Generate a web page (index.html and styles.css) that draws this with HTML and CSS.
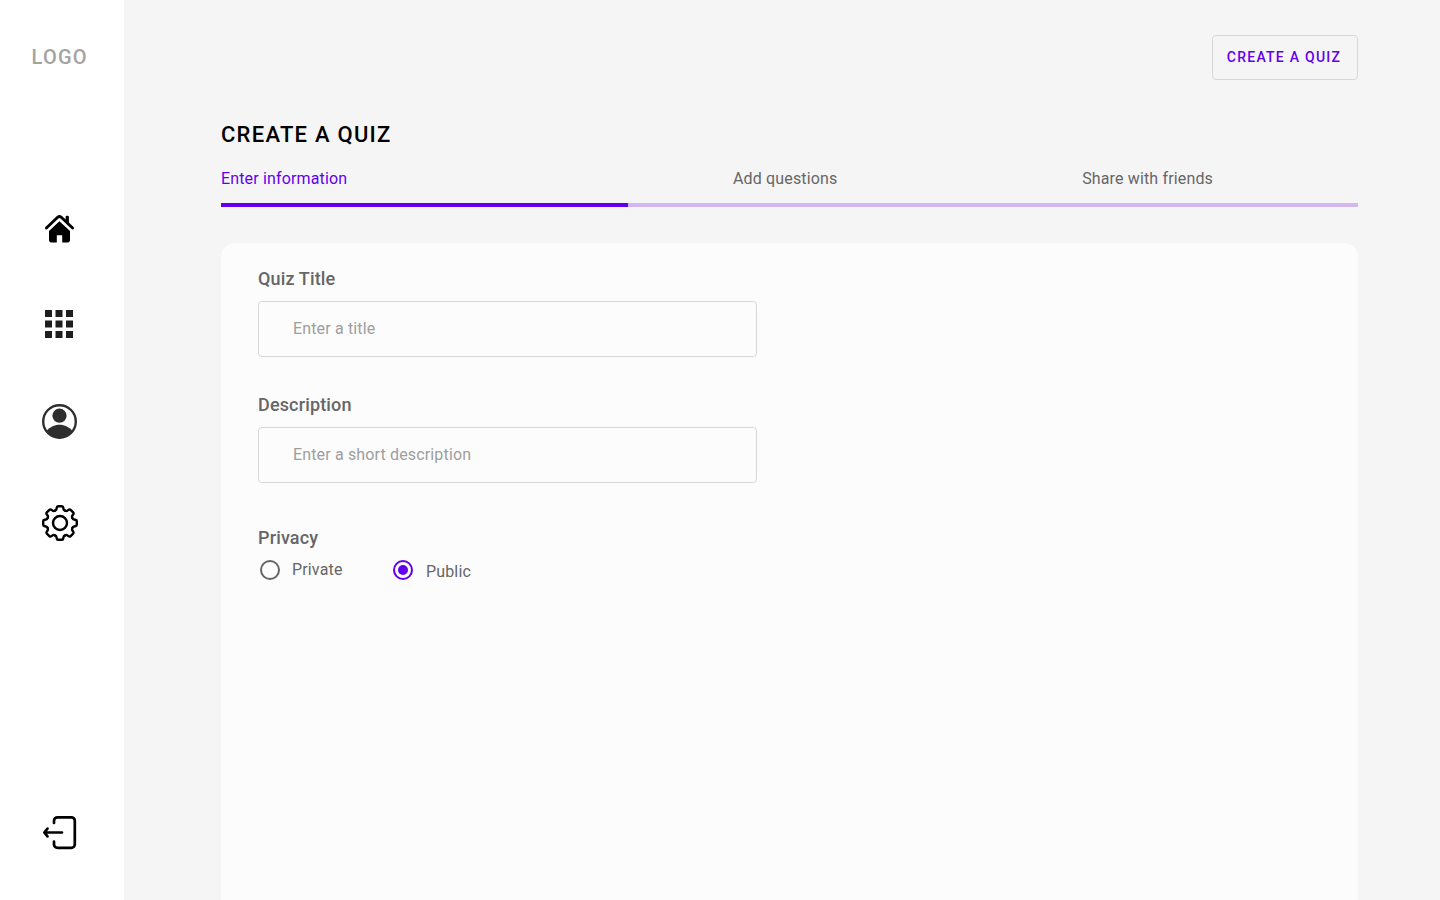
FILE: index.html
```html
<!DOCTYPE html>
<html lang="en">
<head>
<meta charset="utf-8">
<title>Create a quiz</title>
<link rel="stylesheet" href="styles.css">
</head>
<body>
<div class="app">
  <aside class="sidebar">
    <div class="logo">LOGO</div>
    <nav class="nav">
      <a class="nav-item"><svg width="36" height="36" viewBox="0 -.4 36 36"><path d="M24.600 8.600V5.500a1.200 1.200 0 0 1 1.200-1.200h.900a1.200 1.200 0 0 1 1.200 1.200v6.500z"/><path d="M5.400 16.600 16.600 5.900a2.800 2.800 0 0 1 3.700 0l11.300 10.700" fill="none" stroke="#000" stroke-width="2.900" stroke-linecap="round"/><path d="M18.400 9.800 29 19.600V28.400a2.600 2.600 0 0 1-2.600 2.600h-5.200v-7.200h-5.400V31h-5.200A2.600 2.600 0 0 1 8 28.400V19.600z"/></svg></a>
      <a class="nav-item nav-grid"><svg width="36" height="36" viewBox="0 0 36 36" fill="#1e1e1e"><path d="M4 4h7v7H4zM14.500 4h7v7h-7zM25 4h7v7h-7zM4 14.500h7v7H4zM14.500 14.500h7v7h-7zM25 14.500h7v7h-7zM4 25h7v7H4zM14.500 25h7v7h-7zM25 25h7v7h-7z"/></svg></a>
      <a class="nav-item nav-user"><svg width="36" height="36" viewBox="0 0 36 36" fill="#2e2e2e"><circle cx="18.500" cy="17.500" r="16.300" fill="none" stroke="#2e2e2e" stroke-width="2.400"/><circle cx="18.500" cy="11.700" r="7.100"/><path d="M5 27.500C8.500 23 13.500 20.700 18.500 20.700S28.500 23 32 27.500A16.800 16.800 0 0 1 5 27.500z"/></svg></a>
      <a class="nav-item nav-gear"><svg width="38" height="38" viewBox="-19 -19 38 38" fill="none" stroke="#000" stroke-width="2.400" stroke-linecap="round"><defs><path id="tooth" d="M-5.100-12.300C-4.200-12.700-3.600-13.200-3.500-14L-3.300-15.300Q-3.100-16.800-1.800-16.800H1.800Q3.100-16.800 3.300-15.300L3.500-14C3.600-13.200 4.200-12.700 5.100-12.300"/></defs><use href="#tooth"/><use href="#tooth" transform="rotate(45)"/><use href="#tooth" transform="rotate(90)"/><use href="#tooth" transform="rotate(135)"/><use href="#tooth" transform="rotate(180)"/><use href="#tooth" transform="rotate(225)"/><use href="#tooth" transform="rotate(270)"/><use href="#tooth" transform="rotate(315)"/><circle r="7"/></svg></a>
    </nav>
    <a class="nav-item logout"><svg width="36" height="36" viewBox="0 0 36 36" fill="none" stroke="#000" stroke-width="2.700" stroke-linecap="round" stroke-linejoin="round"><path d="M12 9V6.800a3.500 3.500 0 0 1 3.500-3.500h13.800a3.500 3.500 0 0 1 3.500 3.500v23.600a3.500 3.500 0 0 1-3.500 3.500H15.500a3.500 3.500 0 0 1-3.500-3.500V27.500M20 18.500H2.500M5.500 14.600 2.300 18.500 5.500 22.400"/></svg></a>
  </aside>
  <main class="main">
    <div class="topbar"><button class="create-btn">CREATE A QUIZ</button></div>
    <h1 class="title">CREATE A QUIZ</h1>
    <div class="steps">
      <span class="step active">Enter information</span>
      <span class="step">Add questions</span>
      <span class="step">Share with friends</span>
    </div>
    <div class="progress"><div class="progress-fill"></div></div>
    <form class="card">
      <label class="label" for="t">Quiz Title</label>
      <input class="field" id="t" placeholder="Enter a title">
      <label class="label" for="d">Description</label>
      <input class="field" id="d" placeholder="Enter a short description">
      <div class="label privacy">Privacy</div>
      <div class="radios">
        <label class="option"><span class="radio"></span><span>Private</span></label>
        <label class="option public"><span class="radio checked"></span><span class="option-text">Public</span></label>
      </div>
    </form>
  </main>
</div>
</body>
</html>
```
FILE: styles.css
```css
* { box-sizing: border-box; }
body { margin: 0; font-family: Roboto, sans-serif; background: #f5f5f5; }
.app { display: flex; height: 900px; overflow: hidden; background: #f5f5f5; }
.sidebar { width: 124px; flex: none; background: #fff; display: flex; flex-direction: column; align-items: flex-start; }
.logo { margin: 45px 0 0 31.500px; height: 24px; line-height: 24px; font-size: 20px; font-weight: 500; letter-spacing: 1.250px; color: #a5a2a2; }
.nav { display: flex; flex-direction: column; margin-top: 142px; }
.nav-item { display: flex; margin-left: 41px; height: 36px; }
.nav-grid { margin-top: 59px; }
.nav-user { margin: 62px 0 0 41px; }
.nav-gear { margin-top: 64px; height: 38px; }
.logout { margin: auto 0 50px 42px; }
.main { flex: 1; display: flex; flex-direction: column; padding: 35px 82px 0 97px; }
.topbar { display: flex; justify-content: flex-end; }
.create-btn { width: 146px; height: 45px; padding: 0 2px 2px 0; border: 1px solid #d8d8d8; border-radius: 4px; background: transparent; font: 500 14px/20px Roboto, sans-serif; letter-spacing: 1.250px; color: #6200ee; white-space: nowrap; }
.title { margin: 42px 0 0; height: 26px; line-height: 26px; font-size: 22px; font-weight: 500; letter-spacing: 1.250px; color: #000; }
.steps { display: flex; margin-top: 20px; height: 22px; line-height: 22px; justify-content: space-between; padding-right: 145px; }
.step { font-size: 16px; letter-spacing: .150px; color: #666; white-space: nowrap; }
.step.active { color: #6200ee; }
.step:nth-child(2) { margin-left: 141px; }
.progress { flex: none; margin-top: 13px; height: 4px; background: #d2b7f2; }
.progress-fill { width: 407px; height: 4px; background: #6200ee; }
.card { flex: 1; display: flex; flex-direction: column; margin-top: 36px; padding: 24px 37px 0; border-radius: 14px 14px 0 0; background: #fcfcfc; }
.label { height: 24px; line-height: 24px; font-size: 18px; font-weight: 500; letter-spacing: .150px; color: #666; }
.field { width: 499px; height: 56px; flex: none; margin: 10px 0 36px; padding: 0 34px 2px; border: 1px solid #d8d8d8; border-radius: 4px; background: transparent; font: 16px Roboto, sans-serif; letter-spacing: .150px; outline: 0; }
.field::placeholder { color: #9e9e9e; opacity: 1; }
.privacy { margin-top: 7px; }
.radios { display: flex; gap: 50px; margin-top: 10px; padding-left: 2px; }
.option { display: flex; gap: 12px; height: 24px; line-height: 20px; font-size: 16px; letter-spacing: .150px; color: #666; }
.radio { width: 20px; height: 20px; flex: none; border: 2px solid #666; border-radius: 50%; }
.checked { display: flex; align-items: center; justify-content: center; border-color: #6200ee; }
.checked::after { content: ""; width: 10px; height: 10px; border-radius: 50%; background: #6200ee; }
.option-text { padding-top: 2px; margin-left: 1.500px; }
```
